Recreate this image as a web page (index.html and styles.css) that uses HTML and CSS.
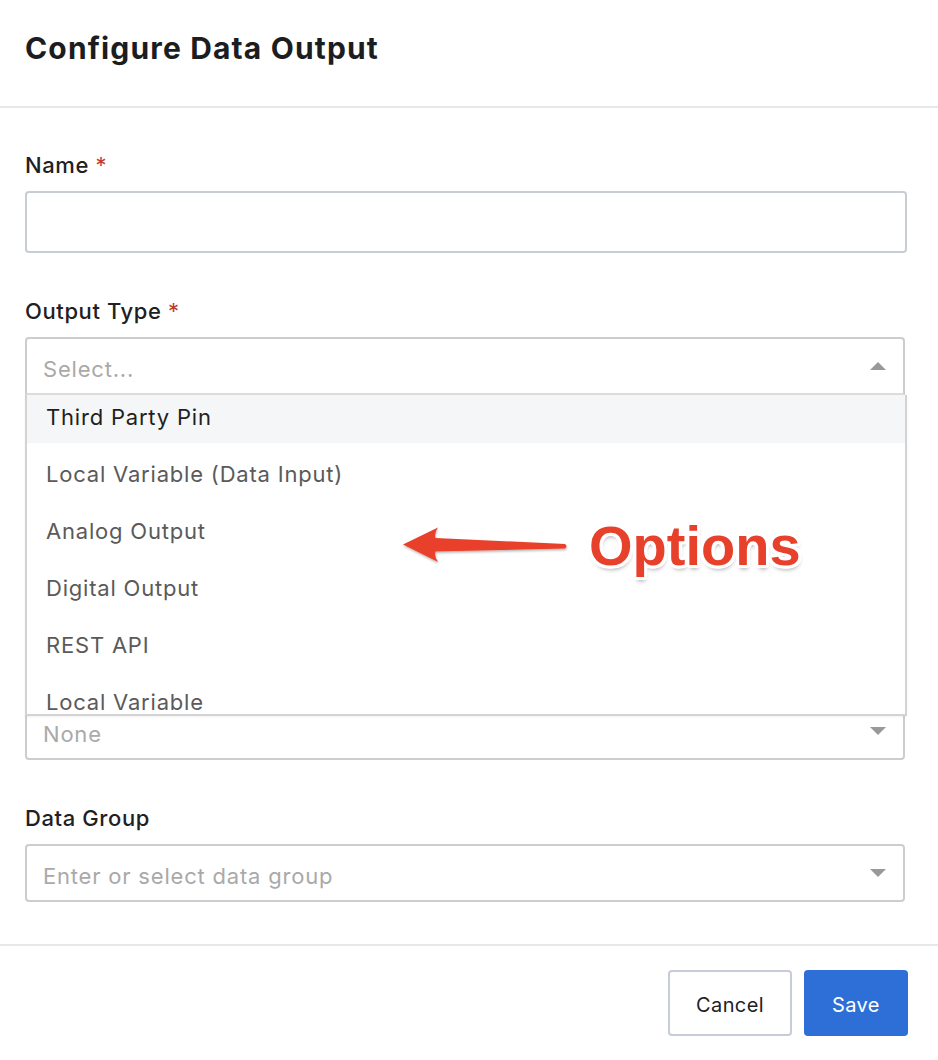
FILE: index.html
```html
<!DOCTYPE html>
<html lang="en">
<head>
<meta charset="utf-8">
<title>Configure Data Output</title>
<link rel="stylesheet" href="styles.css">
</head>
<body>
<div class="modal">
  <header class="modal-header">
    <h1 class="modal-title">Configure Data Output</h1>
  </header>

  <div class="modal-body">
    <div class="field">
      <label class="label">Name <span class="req">*</span></label>
      <div class="input"></div>
    </div>

    <div class="field field-open">
      <label class="label">Output Type <span class="req">*</span></label>
      <div class="select select-open">
        <span class="placeholder">Select...</span>
        <span class="caret caret-up"></span>
        <div class="menu">
          <ul class="menu-list">
            <li class="menu-item is-active">Third Party Pin</li>
            <li class="menu-item">Local Variable (Data Input)</li>
            <li class="menu-item">Analog Output</li>
            <li class="menu-item">Digital Output</li>
            <li class="menu-item">REST API</li>
            <li class="menu-item">Local Variable</li>
          </ul>
        </div>
      </div>
    </div>

    <div class="field">
      <div class="label label-empty"></div>
      <div class="textarea"></div>
    </div>

    <div class="field">
      <div class="label label-empty"></div>
      <div class="select">
        <span class="placeholder">None</span>
        <span class="caret caret-down"></span>
      </div>
    </div>

    <div class="field">
      <label class="label">Data Group</label>
      <div class="select">
        <span class="placeholder">Enter or select data group</span>
        <span class="caret caret-down"></span>
      </div>
    </div>
  </div>

  <footer class="modal-footer">
    <button class="btn btn-secondary">Cancel</button>
    <button class="btn btn-primary">Save</button>
  </footer>

  <svg class="annot-arrow" width="938" height="1060" viewBox="0 0 938 1060" aria-hidden="true">
    <defs>
      <filter id="sh" x="-10%" y="-50%" width="120%" height="200%">
        <feDropShadow dx="0.5" dy="1.5" stdDeviation="1.2" flood-color="#000" flood-opacity="0.3"/>
      </filter>
    </defs>
    <path d="M403,544.5 L438,527.5 Q434,533 435.5,538 L565,544 Q568,546.3 565,548.5 L435.5,551.5 Q434,556 438,562 Z" fill="#e8412b" filter="url(#sh)"/>
  </svg>
  <div class="annot-text">Options</div>
</div>
</body>
</html>
```

FILE: styles.css
```css
* { box-sizing: border-box; }

html, body {
  margin: 0;
  padding: 0;
  background: #ffffff;
}

body {
  font-family: "Inter", "Noto Sans", sans-serif;
  color: #1f2024;
}

.modal {
  position: relative;
  width: 938px;
  height: 1060px;
  overflow: hidden;
  background: #fff;
}

/* header */
.modal-header {
  height: 108px;
  padding: 31px 25px 0;
  border-bottom: 2px solid #e7e8eb;
}

.modal-title {
  margin: 0;
  font-size: 30px;
  line-height: 34px;
  font-weight: 700;
  color: #1c1d21;
  letter-spacing: 1.15px;
}

/* body */
.modal-body {
  padding: 45px 31px 42px 25px;
  display: flex;
  flex-direction: column;
  gap: 46px;
}

.field {
  display: flex;
  flex-direction: column;
}

.field-open {
  position: relative;
  z-index: 5;
}

.label {
  display: block;
  height: 24px;
  font-size: 22px;
  line-height: 24px;
  font-weight: 500;
  color: #1f2024;
  letter-spacing: 0.6px;
  margin-bottom: 14px;
}

.req {
  color: #c0392f;
  font-weight: 400;
}

.input {
  height: 62px;
  border: 2px solid #c8ccd5;
  border-radius: 4px;
  background: #fff;
}

.textarea {
  height: 139px;
  border: 2px solid #c8ccd5;
  border-radius: 4px;
}

.select {
  position: relative;
  height: 58px;
  margin-right: 2px;
  border: 2px solid #cdcdcd;
  border-radius: 4px;
  background: #fff;
  display: flex;
  align-items: center;
  padding: 0 16px;
}

.select-open {
  border-bottom-color: #dcdcdc;
  border-radius: 4px 4px 0 0;
}

.placeholder {
  flex: 1;
  padding-top: 6px;
  font-size: 22px;
  line-height: 26px;
  color: #a9a9a9;
  letter-spacing: 0.8px;
}

.caret {
  width: 0;
  height: 0;
  border-left: 8px solid transparent;
  border-right: 8px solid transparent;
  margin-right: 1px;
}

.caret-up {
  border-bottom: 8px solid #999999;
}

.caret-down {
  border-top: 8px solid #999999;
}

/* dropdown menu */
.menu {
  position: absolute;
  top: 56px;
  left: -2px;
  width: 882px;
  height: 321px;
  overflow: hidden;
  background: #fff;
  border: 2px solid #d3d3d3;
  border-top: 0;
  box-shadow: 0 1px 2px rgba(0, 0, 0, 0.06);
}

.menu-list {
  list-style: none;
  margin: -9px 0 0;
  padding: 0;
}

.menu-item {
  height: 57px;
  display: flex;
  align-items: center;
  padding: 4px 19px 0;
  font-size: 22px;
  line-height: 26px;
  color: #5a5a5a;
  letter-spacing: 0.8px;
}

.menu-item.is-active {
  background: #f5f6f8;
  color: #1f1f22;
}

/* footer */
.modal-footer {
  border-top: 2px solid #e7e8eb;
  padding: 24px 30px 0;
  display: flex;
  justify-content: flex-end;
  gap: 12px;
}

.btn {
  height: 66px;
  border-radius: 4px;
  font-family: "Inter", "Noto Sans", sans-serif;
  font-size: 20px;
  letter-spacing: 0.4px;
  padding-top: 4px;
  cursor: pointer;
}

.btn-secondary {
  width: 124px;
  background: #fff;
  color: #1f2024;
  border: 2px solid #c8ccd6;
}

.btn-primary {
  width: 104px;
  background: #2e6fd7;
  color: #fff;
  border: 0;
}

/* annotation overlay */
.annot-arrow {
  position: absolute;
  left: 0;
  top: 0;
  z-index: 20;
  pointer-events: none;
}

.annot-text {
  position: absolute;
  left: 589px;
  top: 518px;
  z-index: 21;
  font-family: "Liberation Sans", Arial, sans-serif;
  font-weight: 700;
  font-size: 56px;
  line-height: 56px;
  color: #e8412b;
  text-shadow:
    3px 0 0 #fff, -3px 0 0 #fff, 0 3px 0 #fff, 0 -3px 0 #fff,
    2px 2px 0 #fff, -2px 2px 0 #fff, 2px -2px 0 #fff, -2px -2px 0 #fff,
    3px 1.5px 0 #fff, -3px 1.5px 0 #fff, 3px -1.5px 0 #fff, -3px -1.5px 0 #fff,
    1.5px 3px 0 #fff, -1.5px 3px 0 #fff, 1.5px -3px 0 #fff, -1.5px -3px 0 #fff,
    1px 4px 4px rgba(0, 0, 0, 0.35);
}
```
